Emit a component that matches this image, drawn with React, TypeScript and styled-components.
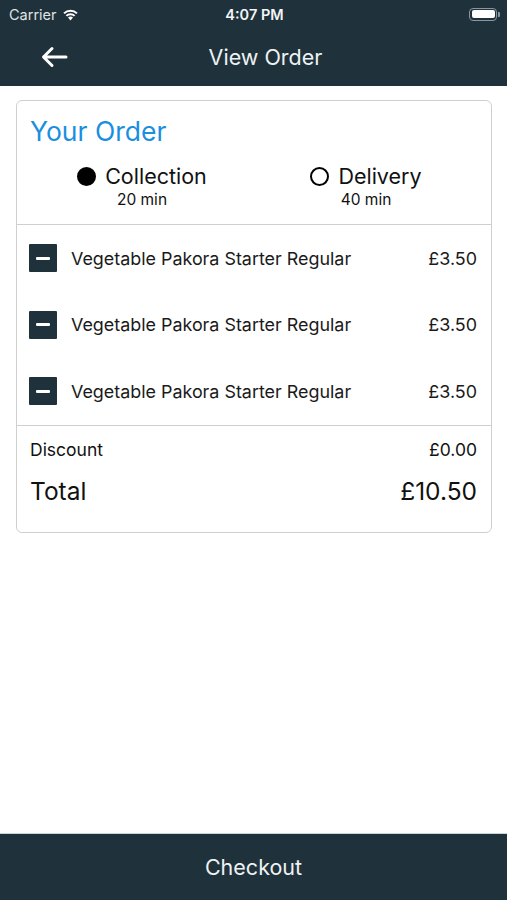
import React from "react";
import styled, { createGlobalStyle } from "styled-components";

const Global = createGlobalStyle`
  html, body { margin: 0; padding: 0; background: #ffffff; }
  body { font-family: Inter, "Liberation Sans", Arial, sans-serif; }
  * { box-sizing: border-box; }
`;

const Page = styled.div`
  display: flex;
  flex-direction: column;
  min-height: 100vh;
`;

const Header = styled.header`
  background: #1f313b;
  color: #f2f5f6;
`;

const StatusBar = styled.div`
  height: 28px;
  display: grid;
  grid-template-columns: 1fr auto 1fr;
  align-items: center;
  padding: 0 7px 0 9px;
  font-size: 14.5px;
`;

const Carrier = styled.div`
  display: flex;
  align-items: center;
  gap: 5px;
  color: #dfe4e6;
`;

const Time = styled.div`
  font-weight: 600;
  color: #f2f5f6;
`;

const Battery = styled.div`
  justify-self: end;
  display: flex;
  align-items: center;
`;

const BatteryBody = styled.div`
  width: 28px;
  height: 13px;
  border: 1.5px solid #8a969c;
  border-radius: 4px;
  padding: 1.5px;
  & > div {
    width: 100%;
    height: 100%;
    background: #ffffff;
    border-radius: 2px;
  }
`;

const BatteryTip = styled.div`
  width: 2px;
  height: 5px;
  background: #8a969c;
  border-radius: 0 1px 1px 0;
  margin-left: 1px;
`;

const NavBar = styled.div`
  height: 58px;
  display: grid;
  grid-template-columns: 80px 1fr 56px;
  align-items: center;
`;

const BackButton = styled.button`
  background: none;
  border: none;
  padding: 0 0 0 40px;
  display: flex;
  align-items: center;
  color: #ffffff;
  cursor: pointer;
`;

const NavTitle = styled.h1`
  margin: 0;
  text-align: center;
  font-weight: 400;
  font-size: 21.5px;
  color: #eef2f3;
`;

const Content = styled.main`
  flex: 1;
  padding: 14px 15px 14px 16px;
`;

const Card = styled.section`
  border: 1px solid #cfcfcf;
  border-radius: 6px;
  background: #ffffff;
`;

const OrderTop = styled.div`
  padding: 14px 13px 14px 13px;
  border-bottom: 1px solid #cfcfcf;
`;

const Title = styled.h2`
  margin: 0;
  font-weight: 400;
  font-size: 26.5px;
  line-height: 32px;
  color: #1a8fdf;
`;

const Options = styled.div`
  margin-top: 16px;
  display: flex;
  justify-content: center;
  margin-left: -13px;
  margin-right: -13px;
`;

const Option = styled.div`
  width: 224px;
  display: flex;
  flex-direction: column;
  align-items: center;
`;

const OptionLabel = styled.div`
  display: flex;
  align-items: center;
  gap: 9px;
  font-size: 21.5px;
  line-height: 26px;
  color: #111111;
`;

const RadioDot = styled.span<{ $checked: boolean }>`
  width: 19px;
  height: 19px;
  border-radius: 50%;
  border: 2px solid #000000;
  background: ${(p) => (p.$checked ? "#000000" : "transparent")};
`;

const OptionTime = styled.div`
  font-size: 15.5px;
  line-height: 20px;
  color: #111111;
  margin-top: 1px;
`;

const Items = styled.div`
  padding: 19px 14px 20px 12px;
  border-bottom: 1px solid #cfcfcf;
  display: flex;
  flex-direction: column;
  gap: 38.5px;
`;

const ItemRow = styled.div`
  height: 28px;
  display: flex;
  align-items: center;
  gap: 14px;
  font-size: 17.9px;
  color: #1a1a1a;
`;

const MinusBox = styled.button`
  width: 28px;
  height: 28px;
  flex: none;
  border: none;
  border-radius: 1px;
  background: #1f313b;
  display: flex;
  align-items: center;
  justify-content: center;
  padding: 0;
  cursor: pointer;
  & > span {
    width: 14px;
    height: 3px;
    background: #ffffff;
    border-radius: 1px;
  }
`;

const ItemName = styled.div`
  flex: 1;
`;

const Price = styled.div`
  text-align: right;
`;

const Summary = styled.div`
  padding: 12px 14px 25px 13px;
  display: flex;
  flex-direction: column;
  gap: 13px;
`;

const SummaryRow = styled.div<{ $big?: boolean }>`
  display: flex;
  justify-content: space-between;
  align-items: center;
  font-size: ${(p) => (p.$big ? "24.5px" : "17.5px")};
  line-height: ${(p) => (p.$big ? "32px" : "24px")};
  color: #111111;
`;

const Footer = styled.button`
  height: 67px;
  border: none;
  border-top: 1px solid #c9d3d8;
  background: #1f313b;
  color: #eef2f3;
  font-family: inherit;
  font-size: 21.5px;
  width: 100%;
  cursor: pointer;
`;

const items = [
  { name: "Vegetable Pakora Starter Regular", price: "£3.50" },
  { name: "Vegetable Pakora Starter Regular", price: "£3.50" },
  { name: "Vegetable Pakora Starter Regular", price: "£3.50" },
];

export default function App() {
  return (
    <Page>
      <Global />
      <Header>
        <StatusBar>
          <Carrier>
            Carrier
            <svg width="17" height="13" viewBox="0 0 17 13">
              <path d="M8.5 12.5 L6 9.6 A3.6 3.6 0 0 1 11 9.6 Z" fill="#ffffff" />
              <path d="M3.7 7.2 A6.8 6.8 0 0 1 13.3 7.2 L11.9 8.6 A4.8 4.8 0 0 0 5.1 8.6 Z" fill="#ffffff" />
              <path d="M1.3 4.7 A10.2 10.2 0 0 1 15.7 4.7 L14.3 6.1 A8.2 8.2 0 0 0 2.7 6.1 Z" fill="#ffffff" />
            </svg>
          </Carrier>
          <Time>4:07 PM</Time>
          <Battery>
            <BatteryBody>
              <div />
            </BatteryBody>
            <BatteryTip />
          </Battery>
        </StatusBar>
        <NavBar>
          <BackButton aria-label="Back">
            <svg width="28" height="22" viewBox="0 0 28 22">
              <path
                d="M26 11 H4 M12 2.5 L3.5 11 L12 19.5"
                stroke="#ffffff"
                strokeWidth="3"
                fill="none"
                strokeLinecap="round"
                strokeLinejoin="round"
              />
            </svg>
          </BackButton>
          <NavTitle>View Order</NavTitle>
          <div />
        </NavBar>
      </Header>
      <Content>
        <Card>
          <OrderTop>
            <Title>Your Order</Title>
            <Options>
              <Option>
                <OptionLabel>
                  <RadioDot $checked />
                  Collection
                </OptionLabel>
                <OptionTime>20 min</OptionTime>
              </Option>
              <Option>
                <OptionLabel>
                  <RadioDot $checked={false} />
                  Delivery
                </OptionLabel>
                <OptionTime>40 min</OptionTime>
              </Option>
            </Options>
          </OrderTop>
          <Items>
            {items.map((it, i) => (
              <ItemRow key={i}>
                <MinusBox aria-label="Remove">
                  <span />
                </MinusBox>
                <ItemName>{it.name}</ItemName>
                <Price>{it.price}</Price>
              </ItemRow>
            ))}
          </Items>
          <Summary>
            <SummaryRow>
              <span>Discount</span>
              <span>£0.00</span>
            </SummaryRow>
            <SummaryRow $big>
              <span>Total</span>
              <span>£10.50</span>
            </SummaryRow>
          </Summary>
        </Card>
      </Content>
      <Footer>Checkout</Footer>
    </Page>
  );
}
